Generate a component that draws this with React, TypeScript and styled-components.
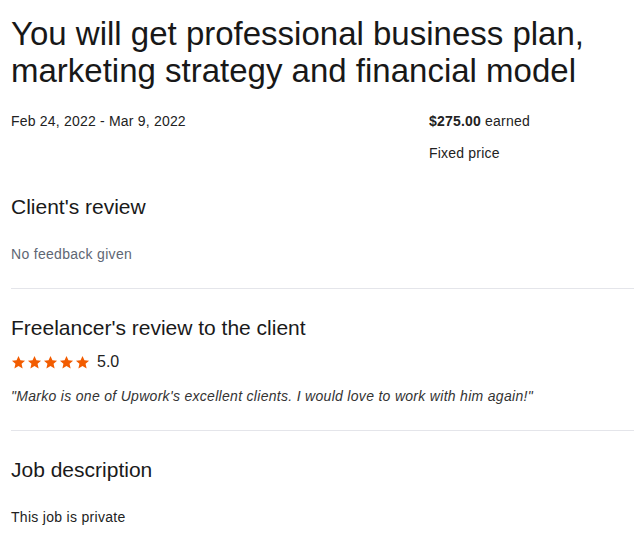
import React from 'react';
import styled, { createGlobalStyle } from 'styled-components';

const GlobalStyle = createGlobalStyle`
  body {
    margin: 0;
    background: #fff;
    font-family: "Liberation Sans", Arial, sans-serif;
    color: #1f1f1f;
  }
`;

const Page = styled.main`
  padding: 15px 0 0 11px;
`;

const Title = styled.h1`
  margin: 0;
  font-size: 33px;
  line-height: 37px;
  font-weight: 400;
  color: #181818;
  letter-spacing: 0;
`;

const MetaRow = styled.div`
  display: grid;
  grid-template-columns: 418px 1fr;
  margin: 24px 0 6px;
`;

const MetaCol = styled.div`
  display: flex;
  flex-direction: column;
  gap: 15px;
`;

const Meta = styled.span`
  font-size: 14px;
  line-height: 17px;
  letter-spacing: 0.2px;
  color: #222;
`;

const Strong = styled.strong`
  font-weight: 600;
`;

const Section = styled.section`
  padding: 26px 0 25px;
  border-bottom: ${(p: { $last?: boolean }) => (p.$last ? 'none' : '1px solid #e4e5ea')};
`;

const Heading = styled.h2`
  margin: 0;
  font-size: 21px;
  line-height: 25px;
  font-weight: 400;
  color: #1a1a1a;
`;

const Muted = styled.p`
  margin: 27px 0 0;
  font-size: 14px;
  line-height: 17px;
  letter-spacing: 0.3px;
  color: ${(p: { $gray?: boolean }) => (p.$gray ? '#5e6673' : '#222')};
`;

const Rating = styled.div`
  display: flex;
  align-items: center;
  gap: 7px;
  margin-top: 13px;
  font-size: 16px;
  color: #222;
`;

const Stars = styled.div`
  display: flex;
  gap: 1px;
`;

const Quote = styled.p`
  margin: 17px 0 0;
  font-size: 14px;
  line-height: 17px;
  letter-spacing: 0.3px;
  font-style: italic;
  color: #333;
`;

const Star = () => (
  <svg width="15" height="15" viewBox="0 0 24 24">
    <path
      fill="#f25c00"
      d="M12 1.5l3.1 6.9 7.4.7-5.6 5 1.7 7.4L12 17.6l-6.6 3.9 1.7-7.4-5.6-5 7.4-.7z"
    />
  </svg>
);

export default function App() {
  return (
    <>
      <GlobalStyle />
      <Page>
        <Title>
          You will get professional business plan,
          <br />
          marketing strategy and financial model
        </Title>
        <MetaRow>
          <MetaCol>
            <Meta>Feb 24, 2022 - Mar 9, 2022</Meta>
          </MetaCol>
          <MetaCol>
            <Meta>
              <Strong>$275.00</Strong> earned
            </Meta>
            <Meta>Fixed price</Meta>
          </MetaCol>
        </MetaRow>
        <Section>
          <Heading>Client's review</Heading>
          <Muted $gray>No feedback given</Muted>
        </Section>
        <Section>
          <Heading>Freelancer's review to the client</Heading>
          <Rating>
            <Stars>
              {[0, 1, 2, 3, 4].map((i) => (
                <Star key={i} />
              ))}
            </Stars>
            5.0
          </Rating>
          <Quote>"Marko is one of Upwork's excellent clients. I would love to work with him again!"</Quote>
        </Section>
        <Section $last>
          <Heading>Job description</Heading>
          <Muted>This job is private</Muted>
        </Section>
      </Page>
    </>
  );
}
